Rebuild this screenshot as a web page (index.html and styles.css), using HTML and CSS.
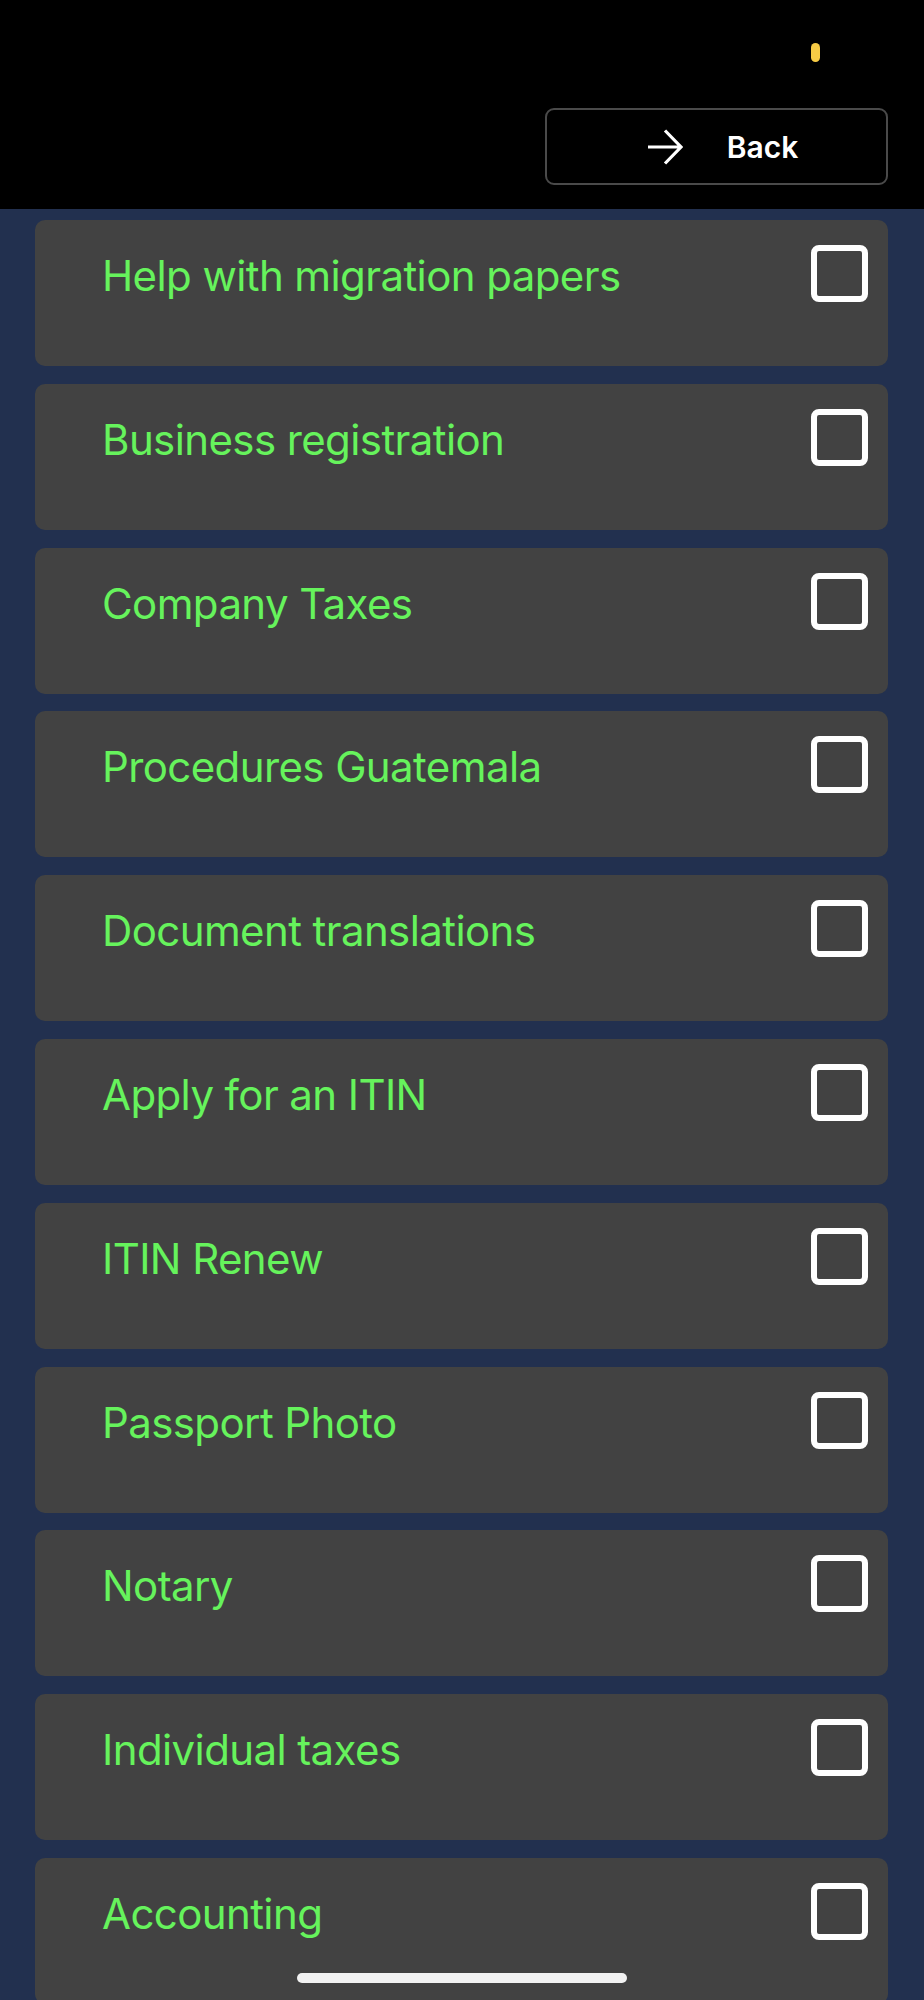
FILE: index.html
```html
<!DOCTYPE html>
<html lang="en">
<head>
    <meta charset="UTF-8">
    <meta name="viewport" content="width=device-width, initial-scale=1.0">
    <title>Services</title>
    <link rel="stylesheet" href="styles.css">
</head>
<body>
    <div id="header">
        <div class="status">
            <span class="dot"></span>
        </div>
        <div class="bar">
            <button id="back">
                <svg class="arrow" width="36" height="36" viewBox="0 0 36 36">
                    <path d="M1 18 H34 M18 1.5 L34 18 L18 34.5" fill="none" stroke="#fff" stroke-width="3.2"/>
                </svg>
                <span>Back</span>
            </button>
        </div>
    </div>

    <div id="list">
        <div class="item"><p>Help with migration papers</p><span class="check"></span></div>
        <div class="item"><p>Business registration</p><span class="check"></span></div>
        <div class="item"><p>Company Taxes</p><span class="check"></span></div>
        <div class="item"><p>Procedures Guatemala</p><span class="check"></span></div>
        <div class="item"><p>Document translations</p><span class="check"></span></div>
        <div class="item"><p>Apply for an ITIN</p><span class="check"></span></div>
        <div class="item"><p>ITIN Renew</p><span class="check"></span></div>
        <div class="item"><p>Passport Photo</p><span class="check"></span></div>
        <div class="item"><p>Notary</p><span class="check"></span></div>
        <div class="item"><p>Individual taxes</p><span class="check"></span></div>
        <div class="item"><p>Accounting</p><span class="check"></span></div>
    </div>

    <div id="home"></div>
</body>
</html>
```

FILE: styles.css
```css
* {
    padding: 0px;
    margin: 0px;
    box-sizing: border-box;
}
body {
    background-color: #22304f;
    font-family: Inter, "Noto Sans", sans-serif;
    height: 2000px;
    overflow: hidden;
}
#header {
    background-color: black;
    height: 209px;
}
.status {
    height: 108px;
    display: flex;
    justify-content: flex-end;
    padding: 43px 104px 0 0;
}
.dot {
    width: 9px;
    height: 19px;
    border-radius: 5px;
    background-color: #f7cb45;
}
.bar {
    display: flex;
    justify-content: flex-end;
    padding-right: 36px;
}
#back {
    width: 343px;
    height: 77px;
    background-color: black;
    border: 2px solid #4a4a4a;
    border-radius: 9px;
    color: white;
    font-family: Inter, sans-serif;
    font-size: 30px;
    font-weight: 600;
    display: flex;
    align-items: center;
    justify-content: center;
    gap: 44px;
    padding-left: 12px;
}
#list {
    padding: 11px 36px 0 35px;
    display: flex;
    flex-direction: column;
    gap: 17.8px;
}
.item {
    height: 146px;
    flex-shrink: 0;
    background-color: #424242;
    border-radius: 10px;
    display: flex;
    justify-content: space-between;
    align-items: flex-start;
    padding: 25px 20px 0 67px;
}
.item p {
    color: #66f35c;
    font-size: 42px;
    line-height: 57px;
    letter-spacing: -0.6px;
    padding-top: 2px;
}
.check {
    width: 57px;
    height: 57px;
    border: 6px solid white;
    border-radius: 8px;
}
#home {
    position: absolute;
    left: 297px;
    top: 1973px;
    width: 330px;
    height: 10px;
    border-radius: 5px;
    background-color: #f2f2f2;
}
```
